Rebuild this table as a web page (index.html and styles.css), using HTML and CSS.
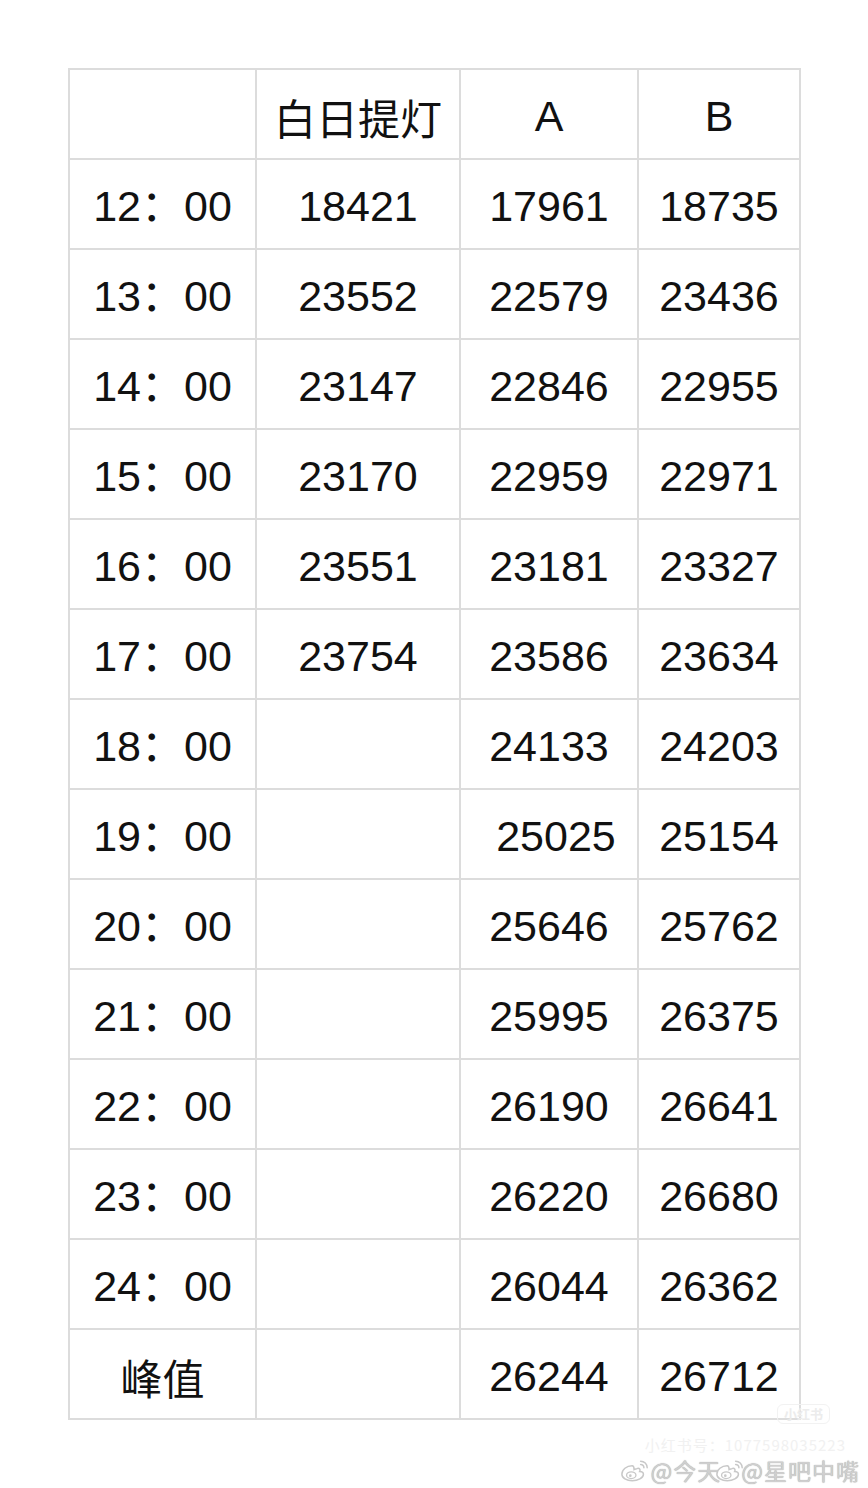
FILE: index.html
```html
<!DOCTYPE html>
<html lang="zh-CN">
<head>
<meta charset="utf-8">
<title>白日提灯</title>
<link rel="stylesheet" href="styles.css">
</head>
<body>
<main class="page">
  <table class="data">
    <colgroup>
      <col class="c1"><col class="c2"><col class="c3"><col class="c4">
    </colgroup>
    <thead>
      <tr><th></th><th class="cjk">白日提灯</th><th>A</th><th>B</th></tr>
    </thead>
    <tbody>
      <tr><td>12：00</td><td>18421</td><td>17961</td><td>18735</td></tr>
      <tr><td>13：00</td><td>23552</td><td>22579</td><td>23436</td></tr>
      <tr><td>14：00</td><td>23147</td><td>22846</td><td>22955</td></tr>
      <tr><td>15：00</td><td>23170</td><td>22959</td><td>22971</td></tr>
      <tr><td>16：00</td><td>23551</td><td>23181</td><td>23327</td></tr>
      <tr><td>17：00</td><td>23754</td><td>23586</td><td>23634</td></tr>
      <tr><td>18：00</td><td></td><td>24133</td><td>24203</td></tr>
      <tr><td>19：00</td><td></td><td class="shift">25025</td><td>25154</td></tr>
      <tr><td>20：00</td><td></td><td>25646</td><td>25762</td></tr>
      <tr><td>21：00</td><td></td><td>25995</td><td>26375</td></tr>
      <tr><td>22：00</td><td></td><td>26190</td><td>26641</td></tr>
      <tr><td>23：00</td><td></td><td>26220</td><td>26680</td></tr>
      <tr><td>24：00</td><td></td><td>26044</td><td>26362</td></tr>
      <tr><td class="cjk">峰值</td><td></td><td>26244</td><td>26712</td></tr>
    </tbody>
  </table>
  <div class="mark">
    <div class="mark-badge">小红书</div>
    <div class="mark-faint">小红书号：1077598035223</div>
    <div class="mark-line">
      <svg class="wb" viewBox="0 0 32 26" aria-hidden="true">
        <path d="M13 8c-6 0-11 4-11 9 0 4 5 7 11 7s12-3 12-7c0-2-2-3-4-3 1-2 0-4-3-3-1 0-3 1-3 1 0-3-1-4-2-4z" fill="#fff" stroke="#c8c8c8" stroke-width="1.6"/>
        <ellipse cx="12" cy="18" rx="5" ry="3.6" fill="none" stroke="#c8c8c8" stroke-width="1.4"/>
        <circle cx="11" cy="18.5" r="1.4" fill="#c8c8c8"/>
        <path d="M22 3a7 7 0 0 1 7 7M22 6.5a3.5 3.5 0 0 1 3.5 3.5" fill="none" stroke="#c8c8c8" stroke-width="1.6" stroke-linecap="round"/>
      </svg>
      <span class="mt">@今天</span>
      <svg class="wb wb2" viewBox="0 0 32 26" aria-hidden="true">
        <path d="M13 8c-6 0-11 4-11 9 0 4 5 7 11 7s12-3 12-7c0-2-2-3-4-3 1-2 0-4-3-3-1 0-3 1-3 1 0-3-1-4-2-4z" fill="#fff" stroke="#c8c8c8" stroke-width="1.6"/>
        <ellipse cx="12" cy="18" rx="5" ry="3.6" fill="none" stroke="#c8c8c8" stroke-width="1.4"/>
        <circle cx="11" cy="18.5" r="1.4" fill="#c8c8c8"/>
        <path d="M22 3a7 7 0 0 1 7 7M22 6.5a3.5 3.5 0 0 1 3.5 3.5" fill="none" stroke="#c8c8c8" stroke-width="1.6" stroke-linecap="round"/>
      </svg>
      <span class="mt">@星吧中嘴</span>
    </div>
  </div>
</main>
</body>
</html>
```
FILE: styles.css
```css
html, body {
  margin: 0;
  padding: 0;
  background: #fff;
}
.page {
  width: 868px;
  height: 1488px;
  position: relative;
  padding: 68px 0 0 68px;
  box-sizing: border-box;
  font-family: "Liberation Sans", "Noto Sans CJK SC", sans-serif;
  color: #111;
}
.data {
  border-collapse: collapse;
  table-layout: fixed;
  width: 731px;
}
.c1 { width: 187px; }
.c2 { width: 204px; }
.c3 { width: 178px; }
.c4 { width: 162px; }
.data th, .data td {
  border: 2px solid #dcdcdc;
  height: 90px;
  box-sizing: border-box;
  padding: 6px 0 0 0;
  text-align: center;
  vertical-align: middle;
  font-size: 43px;
  font-weight: 400;
  line-height: 1.1;
  white-space: nowrap;
}
.data .cjk {
  font-family: "Noto Sans CJK SC", sans-serif;
  font-size: 42px;
}
.data .shift {
  padding-left: 14px;
}
.mark {
  position: absolute;
  right: 0;
  bottom: 0;
  width: 280px;
  height: 90px;
  font-family: "Noto Sans CJK SC", sans-serif;
}
.mark-badge {
  position: absolute;
  right: 38px;
  top: 6px;
  font-size: 13px;
  line-height: 18px;
  font-weight: 700;
  color: #ececec;
  border: 1px solid #f2f2f2;
  border-radius: 6px;
  padding: 0 6px;
}
.mark-faint {
  position: absolute;
  right: 22px;
  top: 38px;
  font-size: 15px;
  line-height: 18px;
  color: #f1f1f1;
  letter-spacing: 1px;
}
.mark-line {
  position: absolute;
  right: 8px;
  top: 58px;
  display: flex;
  align-items: center;
}
.wb {
  width: 30px;
  height: 25px;
}
.wb2 {
  margin-left: -6px;
  margin-right: -4px;
}
.mt {
  font-size: 23px;
  line-height: 28px;
  color: #cfcfcf;
  text-shadow: 0 0 1px #999, 0 0 2px #fff;
  letter-spacing: 1px;
}
```
